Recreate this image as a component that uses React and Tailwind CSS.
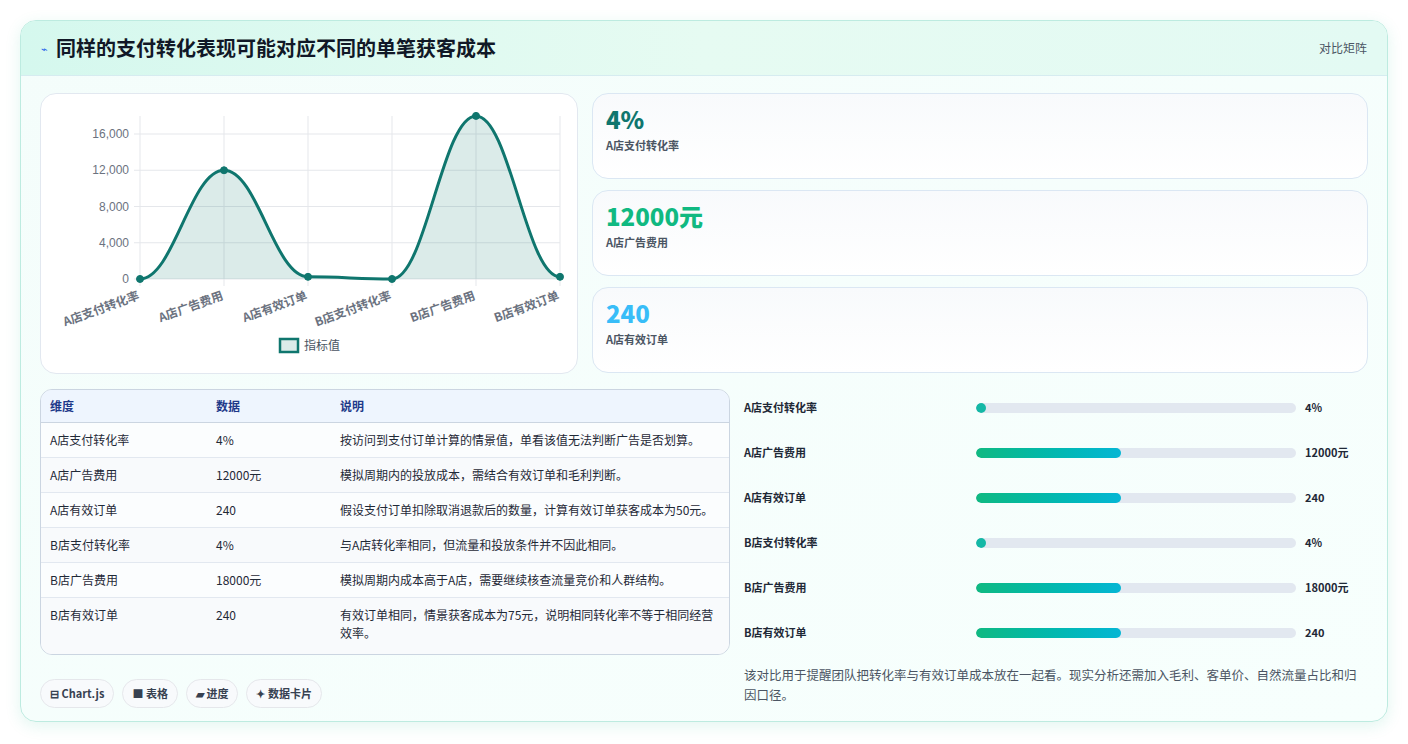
import React from "react";

const F = { fontFamily: '"Noto Sans CJK SC","Noto Sans",sans-serif' };
const xs = [139, 223, 307, 391, 475, 559];
const vals = [4, 12000, 240, 4, 18000, 240];
const yOf = (v) => 278 - (v / 16000) * 145;
const labels = ["A店支付转化率", "A店广告费用", "A店有效订单", "B店支付转化率", "B店广告费用", "B店有效订单"];

function curve() {
  const p = xs.map((x, i) => [x, yOf(vals[i])]);
  let d = `M${p[0][0]},${p[0][1]}`;
  for (let i = 1; i < p.length; i++) {
    const dx = (p[i][0] - p[i - 1][0]) * 0.4;
    d += ` C${p[i - 1][0] + dx},${p[i - 1][1]} ${p[i][0] - dx},${p[i][1]} ${p[i][0]},${p[i][1]}`;
  }
  return d;
}

function Chart() {
  const d = curve();
  return (
    <svg viewBox="40 93 538 281" width="538" height="281" className="block">
      {[0, 4000, 8000, 12000, 16000].map((v) => (
        <g key={v}>
          <line x1="139" x2="559" y1={yOf(v)} y2={yOf(v)} stroke="#e5e7eb" />
          <line x1="133" x2="139" y1={yOf(v)} y2={yOf(v)} stroke="#e5e7eb" />
          <text x="128" y={yOf(v) + 4} textAnchor="end" fontSize="12" fill="#6b7280" fontFamily="Liberation Sans, sans-serif">
            {v.toLocaleString("en-US")}
          </text>
        </g>
      ))}
      {xs.map((x) => (
        <line key={x} x1={x} x2={x} y1="115" y2="285" stroke="#e5e7eb" />
      ))}
      <path d={`${d} L559,278 L139,278 Z`} fill="rgba(15,118,110,0.15)" />
      <path d={d} fill="none" stroke="#0f766e" strokeWidth="3" />
      {xs.map((x, i) => (
        <circle key={x} cx={x} cy={yOf(vals[i])} r="3.5" fill="#0f766e" stroke="#0f766e" />
      ))}
      {xs.map((x, i) => (
        <text key={i} x={x} y="298" textAnchor="end" fontSize="12" fontWeight="600" fill="#6b7280" transform={`rotate(-20 ${x} 298)`} style={F}>
          {labels[i]}
        </text>
      ))}
      <rect x="279" y="338" width="18" height="13" fill="rgba(15,118,110,0.15)" stroke="#0f766e" strokeWidth="2.5" />
      <text x="303" y="349" fontSize="12" fill="#4b5563" style={F}>指标值</text>
    </svg>
  );
}

const stats = [
  ["4%", "A店支付转化率", "text-[#0f766e]"],
  ["12000元", "A店广告费用", "text-[#10b981]"],
  ["240", "A店有效订单", "text-[#38bdf8]"],
];

const rows = [
  ["A店支付转化率", "4%", "按访问到支付订单计算的情景值，单看该值无法判断广告是否划算。"],
  ["A店广告费用", "12000元", "模拟周期内的投放成本，需结合有效订单和毛利判断。"],
  ["A店有效订单", "240", "假设支付订单扣除取消退款后的数量，计算有效订单获客成本为50元。"],
  ["B店支付转化率", "4%", "与A店转化率相同，但流量和投放条件并不因此相同。"],
  ["B店广告费用", "18000元", "模拟周期内成本高于A店，需要继续核查流量竞价和人群结构。"],
  ["B店有效订单", "240", "有效订单相同，情景获客成本为75元，说明相同转化率不等于相同经营效率。"],
];

const bars = [
  ["A店支付转化率", "4%", false],
  ["A店广告费用", "12000元", true],
  ["A店有效订单", "240", true],
  ["B店支付转化率", "4%", false],
  ["B店广告费用", "18000元", true],
  ["B店有效订单", "240", true],
];

export default function App() {
  return (
    <div className="w-[1408px] h-[744px] bg-white pt-5 pl-5" style={F}>
      <div className="w-[1368px] h-[702px] rounded-2xl border border-[#bdebe0] bg-gradient-to-br from-[#f4fdfb] to-[#f7fffd] shadow-[0_4px_16px_rgba(16,185,129,0.12)] overflow-hidden">
        <div className="h-[55px] flex items-center justify-between px-5 bg-gradient-to-r from-[#d5f8ee] via-[#e6fbf2] to-[#e3faf3] border-b border-[#d6ecf0]">
          <div className="flex items-center gap-2">
            <span className="text-[#2563eb] text-[11px]">⌁</span>
            <span className="text-[20px] font-bold text-[#111827]">同样的支付转化表现可能对应不同的单笔获客成本</span>
          </div>
          <span className="text-[12px] text-[#4b5563]">对比矩阵</span>
        </div>
        <div className="px-[19px] pt-[17px]">
          <div className="flex gap-[14px]">
            <div className="w-[538px] h-[281px] rounded-2xl border border-[#e2e8f0] bg-white overflow-hidden">
              <Chart />
            </div>
            <div className="flex-1 flex flex-col gap-[11px]">
              {stats.map(([v, l, c]) => (
                <div key={l} className="h-[86px] rounded-2xl border border-[#dbe7f3] bg-gradient-to-b from-[#f8fafc] to-white px-[13px] pt-[10px]">
                  <div className={`text-[24px] font-extrabold leading-[30px] ${c}`}>{v}</div>
                  <div className="text-[11px] font-bold text-[#4b5563] mt-[3px]">{l}</div>
                </div>
              ))}
            </div>
          </div>
          <div className="flex gap-[14px] mt-[15px]">
            <div className="w-[690px]">
              <div className="rounded-xl border border-[#cbd5e1] overflow-hidden bg-[#f8fafc]">
                <div className="flex h-[33px] items-center bg-[#eef5fe] border-b border-[#cbd5e1] text-[12px] font-bold text-[#1e3a8a]">
                  <div className="w-[175px] pl-[9px]">维度</div>
                  <div className="w-[124px]">数据</div>
                  <div className="flex-1">说明</div>
                </div>
                {rows.map(([a, b, c], i) => (
                  <div key={a} className={`flex text-[12px] text-[#1f2937] py-[8px] ${i < 5 ? "border-b border-[#e2e8f0]" : ""} ${i % 2 ? "bg-[#f8fafc]" : "bg-[#fbfdfe]"}`}>
                    <div className="w-[175px] pl-[9px] leading-[18px]">{a}</div>
                    <div className="w-[124px] leading-[18px]">{b}</div>
                    <div className="flex-1 pr-3 leading-[18px]">{c}{i === 5 && <div className="h-[4px]" />}</div>
                  </div>
                ))}
              </div>
              <div className="flex gap-2 mt-[24px]">
                {["⊟ Chart.js", "■ 表格", "▰ 进度", "✦ 数据卡片"].map((t) => (
                  <span key={t} className="h-[29px] px-[9px] flex items-center rounded-full border border-[#e5e7eb] bg-[#f8fafc] text-[11px] font-bold text-[#374151]">{t}</span>
                ))}
              </div>
            </div>
            <div className="flex-1">
              <div className="flex flex-col -mt-[4px]">
                {bars.map(([l, v, big]) => (
                  <div key={l} className="h-[45px] flex items-center">
                    <div className="w-[232px] text-[11px] font-bold text-[#1f2937]">{l}</div>
                    <div className="w-[320px] h-[10px] rounded-full bg-[#e2e8f0] overflow-hidden">
                      <div className={`h-full rounded-full ${big ? "w-[145px] bg-gradient-to-r from-[#10b981] to-[#06b6d4]" : "w-[10px] bg-[#14b8a6]"}`} />
                    </div>
                    <div className="ml-[9px] text-[11px] font-bold text-[#1f2937]">{v}</div>
                  </div>
                ))}
              </div>
              <div className="mt-[10px] text-[12.5px] leading-[20px] text-[#4b5563] pr-[10px]">
                该对比用于提醒团队把转化率与有效订单成本放在一起看。现实分析还需加入毛利、客单价、自然流量占比和归因口径。
              </div>
            </div>
          </div>
        </div>
      </div>
    </div>
  );
}
